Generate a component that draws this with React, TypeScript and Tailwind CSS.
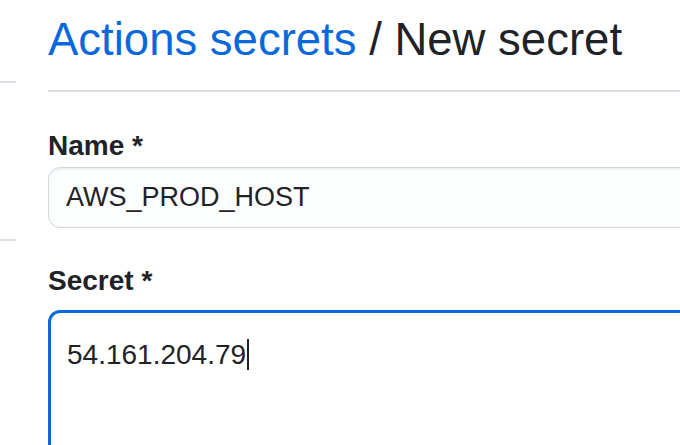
import React from "react";

const font = { fontFamily: '"Liberation Sans", Arial, sans-serif' };

export default function App() {
  return (
    <div
      style={font}
      className="flex h-[445px] w-[680px] overflow-hidden bg-white text-[#1f2328]"
    >
      {/* sidebar edge */}
      <div className="w-[16px] shrink-0">
        <div className="mt-[81px] h-[2px] bg-[#d8dee4]" />
        <div className="mt-[156px] h-[2px] bg-[#d8dee4]" />
      </div>

      <main className="ml-[32px] w-[720px] shrink-0">
        <h1 className="border-b-2 border-[#d8dee4] pb-[22px] pt-[12px] text-[45.5px] font-normal leading-[56px]">
          <a href="#" className="text-[#0969da]">
            Actions secrets
          </a>{" "}
          / New secret
        </h1>

        <form className="mt-[37px]">
          <label className="block text-[28px] font-bold leading-[34px]">
            Name *
          </label>
          <input
            readOnly
            value="AWS_PROD_HOST"
            style={font}
            className="mt-[4px] block h-[61px] w-full rounded-[12px] border border-[#d0d7de] bg-[#fcfdfd] pl-[17px] text-[27px] text-[#1f2328] shadow-[inset_0_2px_0_#eef1f4] outline-none"
          />

          <label className="mt-[36px] block text-[28px] font-bold leading-[34px]">
            Secret *
          </label>
          <div className="mt-[12px] h-[200px] rounded-[12px] border-[3px] border-[#0969da] px-[16px] pt-[20px] text-[28px] leading-[36px]">
            54.161.204.79
            <span className="ml-[1px] inline-block h-[31px] w-[1.5px] translate-y-[6px] bg-[#1f2328] align-baseline" />
          </div>
        </form>
      </main>
    </div>
  );
}
